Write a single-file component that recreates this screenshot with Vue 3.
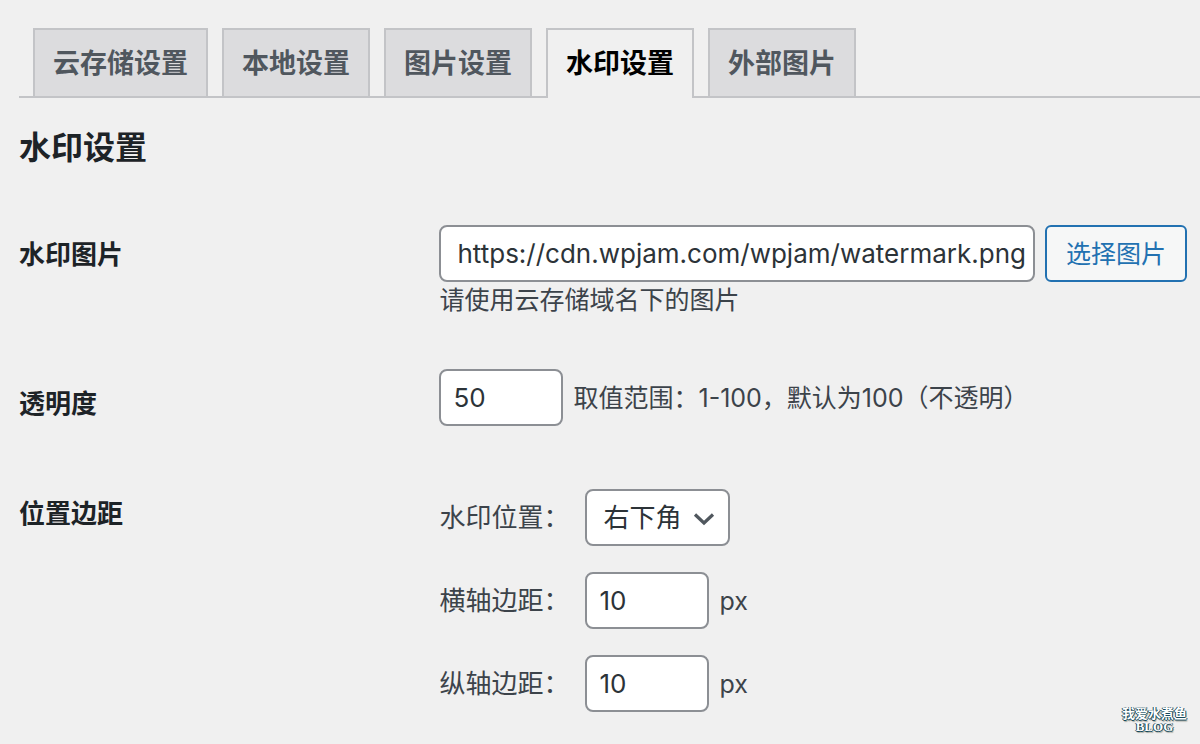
<script setup>
import { ref } from 'vue'

const tabs = ['云存储设置', '本地设置', '图片设置', '水印设置', '外部图片']
const active = ref('水印设置')
const image = ref('https://cdn.wpjam.com/wpjam/watermark.png')
const opacity = ref('50')
const position = ref('右下角')
const positions = ['左上角', '右上角', '左下角', '右下角']
const marginX = ref('10')
const marginY = ref('10')
</script>

<template>
  <main class="page">
    <nav class="tabs">
      <a
        v-for="tab in tabs"
        :key="tab"
        href="#"
        class="tab"
        :class="{ active: tab === active }"
        @click.prevent="active = tab"
      >{{ tab }}</a>
    </nav>

    <h2 class="title">水印设置</h2>

    <form class="form" @submit.prevent>
      <div class="row row-image">
        <label class="heading" for="image">水印图片</label>
        <div class="field">
          <div class="line">
            <input id="image" v-model="image" class="control url" type="text">
            <button class="button" type="button">选择图片</button>
          </div>
          <p class="hint">请使用云存储域名下的图片</p>
        </div>
      </div>

      <div class="row row-opacity">
        <label class="heading" for="opacity">透明度</label>
        <div class="line">
          <input id="opacity" v-model="opacity" class="control number" type="text" inputmode="numeric">
          <span class="hint">取值范围：1-100，默认为100（不透明）</span>
        </div>
      </div>

      <div class="row row-position">
        <span class="heading">位置边距</span>
        <div class="stack">
          <div class="line">
            <label class="sub" for="position">水印位置：</label>
            <span class="select-wrap">
              <select id="position" v-model="position" class="control select">
                <option v-for="p in positions" :key="p">{{ p }}</option>
              </select>
              <svg class="chevron" viewBox="0 0 22 14" aria-hidden="true">
                <path d="M2 2.5 L11 11 L20 2.5" fill="none" stroke="#50575e" stroke-width="3.2" />
              </svg>
            </span>
          </div>
          <div class="line">
            <label class="sub" for="mx">横轴边距：</label>
            <input id="mx" v-model="marginX" class="control number" type="text" inputmode="numeric">
            <span class="hint">px</span>
          </div>
          <div class="line">
            <label class="sub" for="my">纵轴边距：</label>
            <input id="my" v-model="marginY" class="control number" type="text" inputmode="numeric">
            <span class="hint">px</span>
          </div>
        </div>
      </div>
    </form>

    <div class="brand">
      <span class="brand-name">我爱水煮鱼</span>
      <span class="brand-sub">BLOG</span>
    </div>
  </main>
</template>

<style>
body {
  margin: 0;
  background: #f0f0f0;
}
</style>

<style scoped>
.page {
  position: relative;
  box-sizing: border-box;
  min-height: 100vh;
  padding: 28px 0 32px 19px;
  color: #3c434a;
  font-family: Inter, "Noto Sans CJK SC", sans-serif;
  font-size: 26px;
  line-height: 36px;
}
.tabs {
  display: flex;
  gap: 14px;
  padding-left: 14px;
  border-bottom: 2px solid #c3c4c7;
}
.tab {
  box-sizing: border-box;
  height: 68px;
  padding: 16px 18px 0;
  border: 2px solid #c3c4c7;
  border-bottom: 0;
  background: #dcdcde;
  color: #50575e;
  font-size: 27px;
  font-weight: 600;
  text-decoration: none;
}
.tab.active {
  height: 70px;
  margin-bottom: -2px;
  background: #f0f0f0;
  color: #000;
}
.title {
  margin: 28px 0 0;
  color: #1d2327;
  font-size: 32px;
  font-weight: 600;
  line-height: 44px;
}
.form {
  padding: 55px 13px 0 0;
}
.row {
  display: grid;
  grid-template-columns: 36% 1fr;
  align-items: start;
}
.heading {
  color: #1d2327;
  font-weight: 600;
}
.row-image .heading {
  padding-top: 12px;
}
.row-opacity {
  margin-top: 51px;
}
.row-opacity .heading {
  padding-top: 17px;
}
.row-position {
  margin-top: 63px;
}
.row-position .heading {
  padding-top: 7px;
}
.line {
  display: flex;
  align-items: center;
  gap: 10px;
}
.stack {
  display: grid;
  gap: 26px;
}
.control {
  box-sizing: border-box;
  height: 57px;
  border: 2px solid #8c8f94;
  border-radius: 8px;
  background: #fff;
  color: #2c3338;
  font: inherit;
}
.url {
  flex: 1;
  min-width: 0;
  padding: 0 4px 0 16px;
}
.number {
  width: 124px;
  padding: 0 12px;
}
.button {
  box-sizing: border-box;
  height: 57px;
  padding: 0 19px;
  border: 2px solid #2271b1;
  border-radius: 6px;
  background: #f6f7f7;
  color: #2271b1;
  font: inherit;
  font-size: 25px;
}
.hint {
  margin: 0;
  font-size: 25px;
}
.sub {
  width: 136px;
  white-space: nowrap;
}
.select-wrap {
  position: relative;
}
.select {
  display: block;
  width: 145px;
  padding: 0 44px 0 16px;
  appearance: none;
}
.chevron {
  position: absolute;
  top: 23px;
  right: 15px;
  width: 22px;
  height: 14px;
  pointer-events: none;
}
.brand {
  position: absolute;
  right: 13px;
  bottom: 11px;
  display: flex;
  flex-direction: column;
  align-items: center;
  color: #fff;
  font-size: 13px;
  font-weight: 700;
  text-shadow: 1px 0 #17495a, 0 1px #17495a, -1px 0 #17495a, 1px 2px 1px #a8aaa0;
}
.brand-name {
  line-height: 16px;
}
.brand-sub {
  font-family: "Liberation Serif", serif;
  line-height: 12px;
}
</style>
